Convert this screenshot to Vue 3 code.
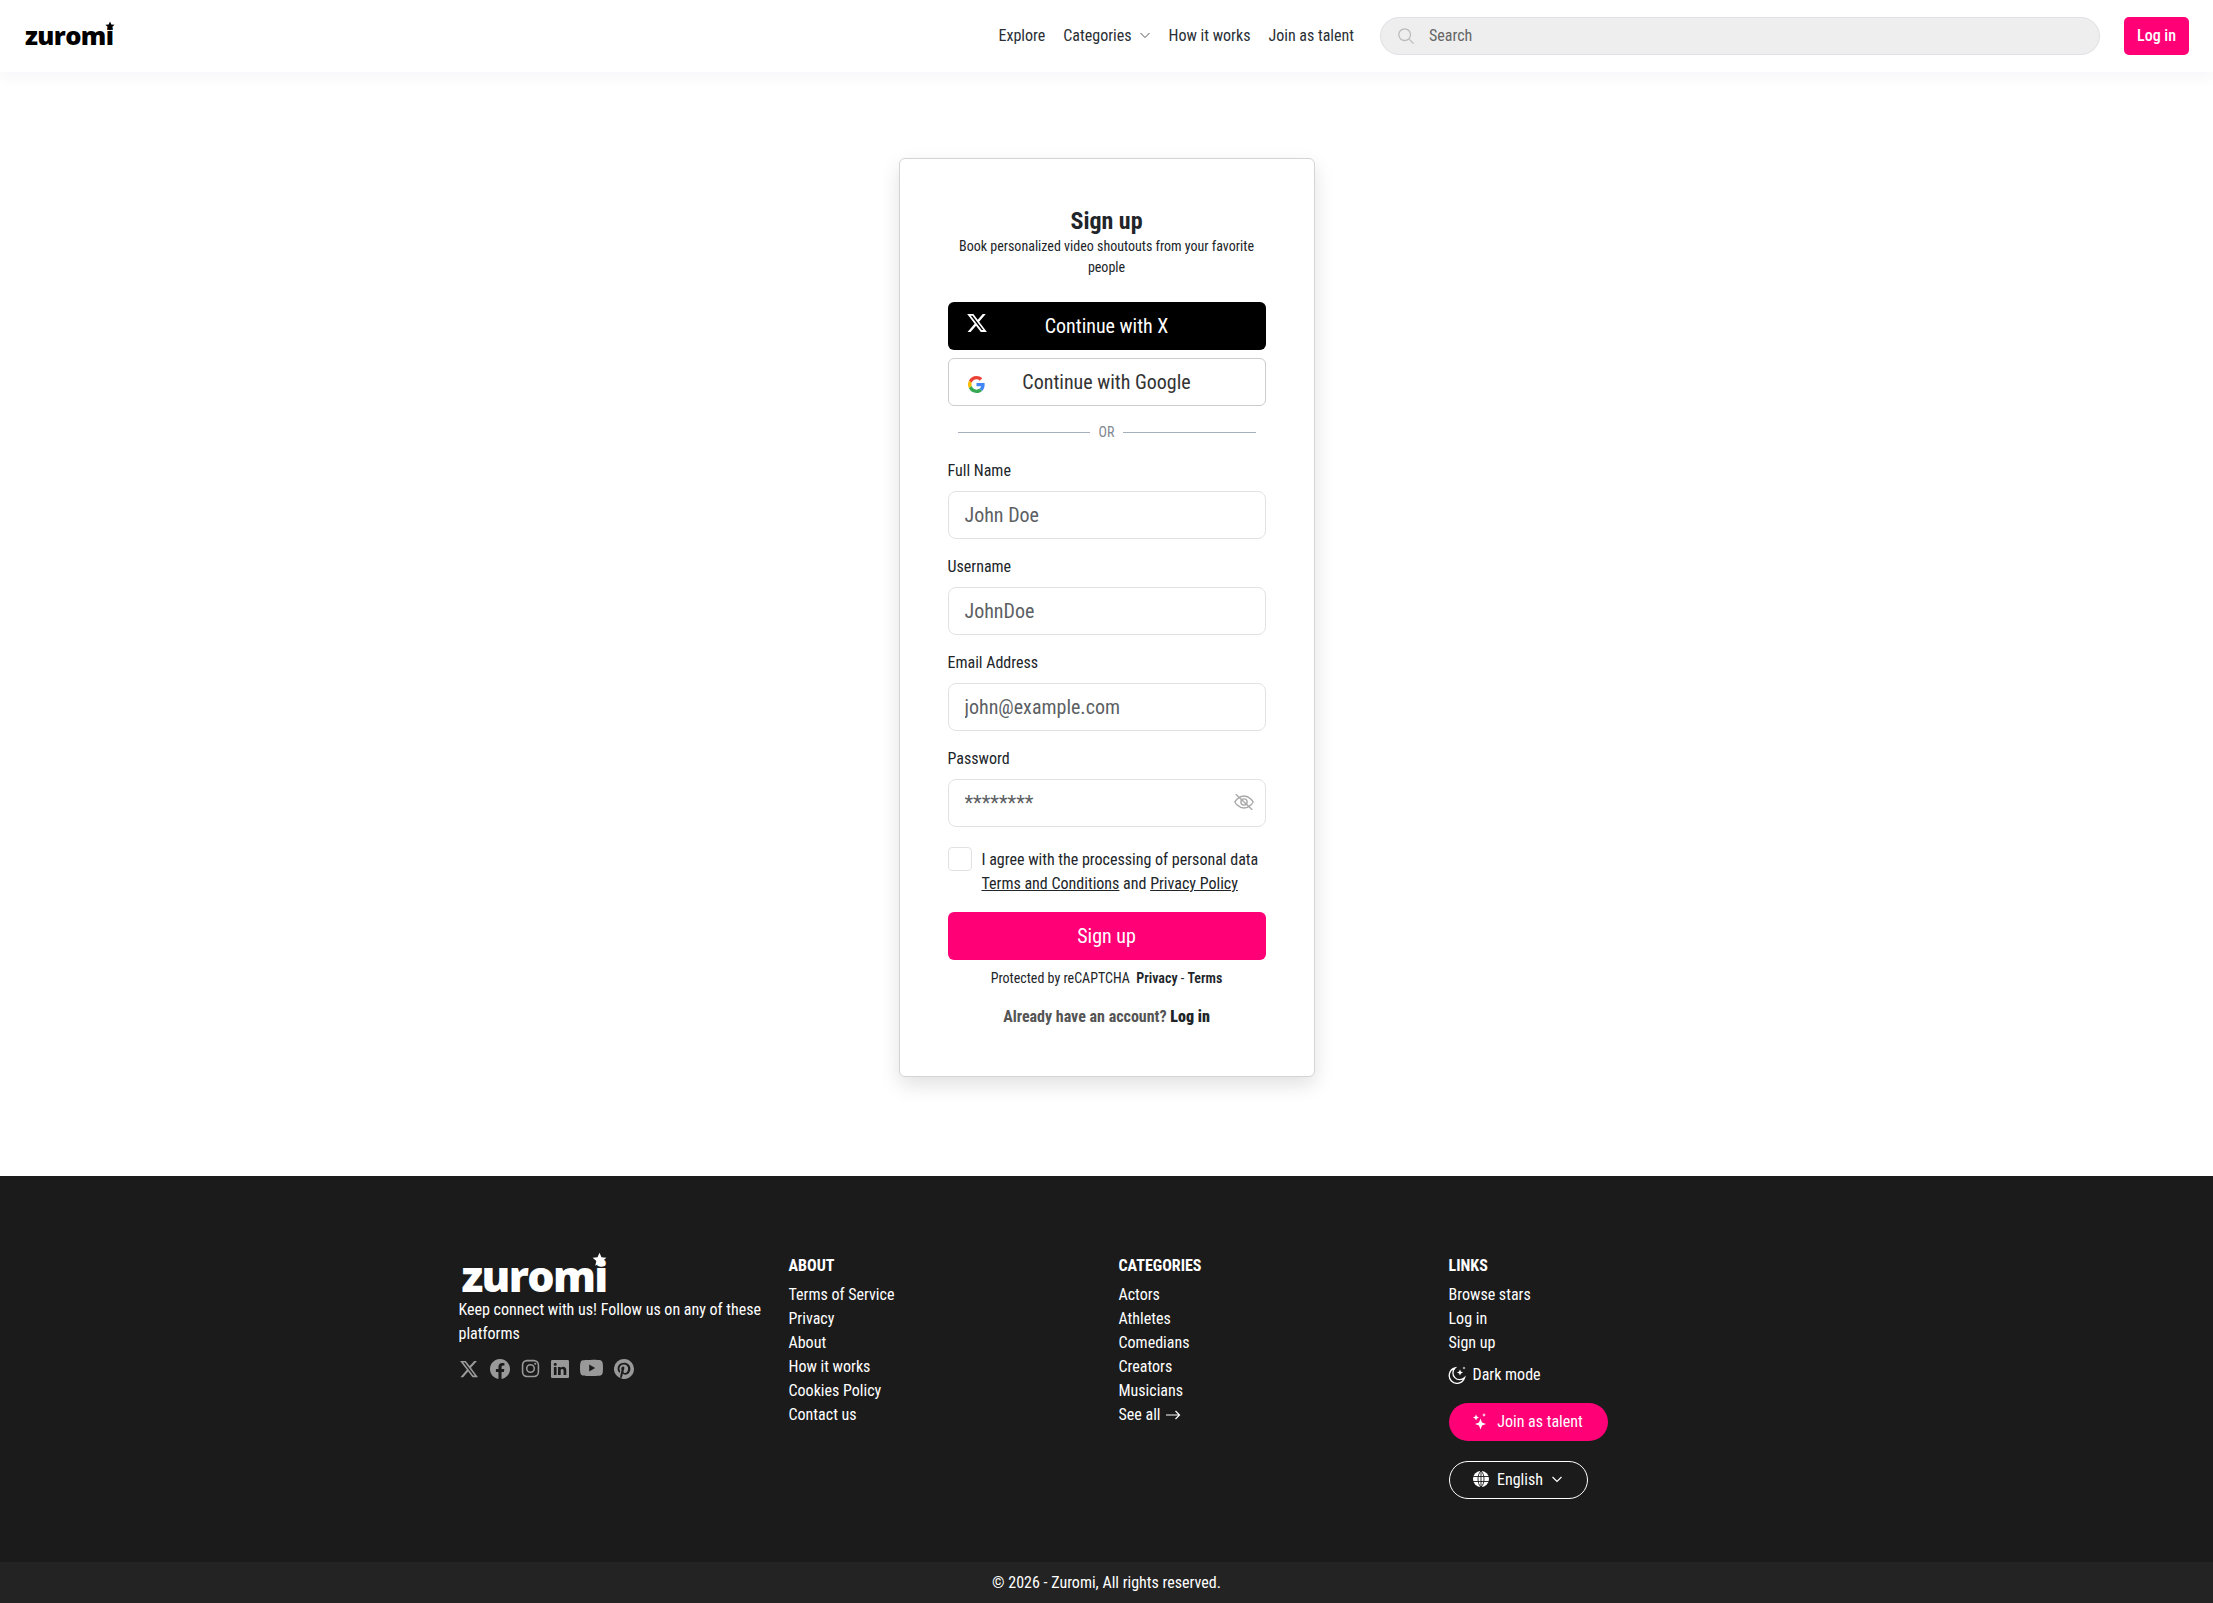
<!-- App.vue -->
<!-- Sign up page: top bar, form card and footer. -->

<script setup>
const navLinks = ['Explore', 'Categories', 'How it works', 'Join as talent']

const fields = [
  { label: 'Full Name', placeholder: 'John Doe', type: 'text' },
  { label: 'Username', placeholder: 'JohnDoe', type: 'text' },
  { label: 'Email Address', placeholder: 'john@example.com', type: 'email' },
]

const aboutLinks = ['Terms of Service', 'Privacy', 'About', 'How it works', 'Cookies Policy', 'Contact us']
const categoryLinks = ['Actors', 'Athletes', 'Comedians', 'Creators', 'Musicians']
const otherLinks = ['Browse stars', 'Log in', 'Sign up']

const xPath = 'M18.244 2.25h3.308l-7.227 8.26 8.502 11.24H16.17l-5.214-6.817L4.99 21.75H1.68l7.73-8.835L1.254 2.25H8.08l4.713 6.231zm-1.161 17.52h1.833L7.084 4.126H5.117z'
</script>

<template>
  <div class="page">
    <header class="topbar">
      <a class="logo">zuromi<svg class="logo-star" viewBox="0 0 24 24"><path d="M12 1l3.2 7.2 7.8.8-5.9 5.2 1.7 7.7L12 18l-6.8 4 1.7-7.7L1 9l7.8-.8z" /></svg></a>
      <nav class="nav">
        <a v-for="link in navLinks" :key="link" class="nav-link">
          {{ link }}
          <svg v-if="link === 'Categories'" class="caret" viewBox="0 0 12 12"><path d="M1.5 4l4.5 4.5L10.5 4" /></svg>
        </a>
      </nav>
      <div class="search">
        <svg class="search-icon" viewBox="0 0 20 20"><circle cx="8.5" cy="8.5" r="6.5" /><path d="M13.5 13.5l5 5" /></svg>
        <input type="text" placeholder="Search" />
      </div>
      <button class="login-btn">Log in</button>
    </header>

    <main class="main">
      <section class="card">
        <h1>Sign up</h1>
        <p class="subtitle">Book personalized video shoutouts from your favorite people</p>

        <button class="social social-x">
          <svg class="x-icon" viewBox="0 0 24 24"><path :d="xPath" /></svg>
          Continue with X
        </button>
        <button class="social social-google">
          <svg class="google-icon" viewBox="0 0 48 48">
            <path fill="#EA4335" d="M24 9.5c3.5 0 6.7 1.2 9.2 3.6l6.9-6.9C35.9 2.4 30.5 0 24 0 14.6 0 6.5 5.4 2.6 13.2l8 6.2C12.5 13.6 17.8 9.5 24 9.5z" />
            <path fill="#4285F4" d="M46.98 24.55c0-1.57-.15-3.09-.38-4.55H24v9.02h12.94c-.58 2.96-2.26 5.48-4.78 7.18l7.73 6c4.51-4.18 7.09-10.36 7.09-17.65z" />
            <path fill="#FBBC05" d="M10.53 28.59c-.48-1.45-.76-2.99-.76-4.59s.27-3.14.76-4.59l-7.98-6.19C.92 16.46 0 20.12 0 24c0 3.88.92 7.54 2.56 10.78l7.97-6.19z" />
            <path fill="#34A853" d="M24 48c6.48 0 11.93-2.13 15.89-5.81l-7.73-6c-2.15 1.45-4.92 2.3-8.16 2.3-6.26 0-11.57-4.22-13.47-9.91l-7.98 6.19C6.51 42.62 14.62 48 24 48z" />
          </svg>
          Continue with Google
        </button>

        <div class="divider"><span>OR</span></div>

        <label v-for="field in fields" :key="field.label" class="field">
          {{ field.label }}
          <input :type="field.type" :placeholder="field.placeholder" />
        </label>

        <label class="field">
          Password
          <span class="password">
            <input type="text" placeholder="********" />
            <svg class="eye" viewBox="0 0 24 24">
              <path d="M2 12s3.600-6.500 10-6.500S22 12 22 12s-3.600 6.500-10 6.500S2 12 2 12z" />
              <circle cx="12" cy="12" r="3.400" />
              <path d="M3 3.500l18 17" />
            </svg>
          </span>
        </label>

        <div class="agree">
          <span class="checkbox"></span>
          <p>I agree with the processing of personal data<br /><a>Terms and Conditions</a> and <a>Privacy Policy</a></p>
        </div>

        <button class="submit">Sign up</button>
        <p class="recaptcha">Protected by reCAPTCHA &nbsp;<b>Privacy</b> - <b>Terms</b></p>
        <p class="have-account">Already have an account? <b>Log in</b></p>
      </section>
    </main>

    <footer class="footer">
      <div class="footer-inner">
        <div class="col">
          <a class="logo logo-footer">zuromi<svg class="logo-star" viewBox="0 0 24 24"><path d="M12 1l3.2 7.2 7.8.8-5.9 5.2 1.7 7.7L12 18l-6.8 4 1.7-7.7L1 9l7.8-.8z" /></svg></a>
          <p class="follow">Keep connect with us! Follow us on any of these platforms</p>
          <div class="socials">
            <svg class="s-x" viewBox="0 0 24 24"><path :d="xPath" /></svg>
            <svg class="s-fb" viewBox="0 0 16 16"><path d="M16 8.049c0-4.446-3.582-8.05-8-8.05C3.58 0-.002 3.603-.002 8.05c0 4.017 2.926 7.347 6.75 7.951v-5.625h-2.03V8.05H6.75V6.275c0-2.017 1.195-3.131 3.022-3.131.876 0 1.791.157 1.791.157v1.98h-1.009c-.993 0-1.303.621-1.303 1.258v1.51h2.218l-.354 2.326H9.25V16c3.824-.604 6.75-3.934 6.75-7.951" /></svg>
            <svg class="s-ig" viewBox="0 0 24 24"><rect x="2" y="2" width="20" height="20" rx="5.500" /><circle cx="12" cy="12" r="4.800" /><circle class="dot" cx="18" cy="6" r="1.400" /></svg>
            <svg class="s-in" viewBox="0 0 16 16"><path d="M0 1.146C0 .513.526 0 1.175 0h13.65C15.474 0 16 .513 16 1.146v13.708c0 .633-.526 1.146-1.175 1.146H1.175C.526 16 0 15.487 0 14.854zm4.943 12.248V6.169H2.542v7.225zm-1.2-8.212c.837 0 1.358-.554 1.358-1.248-.015-.709-.52-1.248-1.342-1.248S2.4 3.226 2.4 3.934c0 .694.521 1.248 1.327 1.248zm4.908 8.212V9.359c0-.216.016-.432.08-.586.173-.431.568-.878 1.232-.878.869 0 1.216.662 1.216 1.634v3.865h2.401V9.25c0-2.22-1.184-3.252-2.764-3.252-1.274 0-1.845.7-2.165 1.193v.025h-.016l.016-.025V6.169h-2.4c.03.678 0 7.225 0 7.225z" /></svg>
            <svg class="s-yt" viewBox="0 0 16 16"><path d="M8.051 1.999h.089c.822.003 4.987.033 6.11.335a2.01 2.01 0 0 1 1.415 1.42c.101.38.172.883.22 1.402l.01.104.022.26.008.104c.065.914.073 1.77.074 1.957v.075c-.001.194-.01 1.108-.082 2.06l-.008.105-.009.104c-.05.572-.124 1.14-.235 1.558a2.01 2.01 0 0 1-1.415 1.42c-1.16.312-5.569.334-6.18.335h-.142c-.309 0-1.587-.006-2.927-.052l-.17-.006-.087-.004-.171-.007-.171-.007c-1.11-.049-2.167-.128-2.654-.26a2.01 2.01 0 0 1-1.415-1.419c-.111-.417-.185-.986-.235-1.558L.09 9.82l-.008-.104A31 31 0 0 1 0 7.68v-.123c.002-.215.01-.958.064-1.778l.007-.103.003-.052.008-.104.022-.26.01-.104c.048-.519.119-1.023.22-1.402a2.01 2.01 0 0 1 1.415-1.42c.487-.13 1.544-.21 2.654-.26l.17-.007.172-.006.086-.003.171-.007A100 100 0 0 1 7.858 2zM6.4 5.209v4.818l4.157-2.408z" /></svg>
            <svg class="s-pin" viewBox="0 0 16 16"><path d="M8 0a8 8 0 0 0-2.915 15.452c-.07-.633-.134-1.606.027-2.297.146-.625.938-3.977.938-3.977s-.239-.479-.239-1.187c0-1.113.645-1.943 1.448-1.943.682 0 1.012.512 1.012 1.127 0 .686-.437 1.712-.663 2.663-.188.796.4 1.446 1.185 1.446 1.422 0 2.515-1.5 2.515-3.664 0-1.915-1.377-3.254-3.342-3.254-2.276 0-3.612 1.707-3.612 3.471 0 .688.265 1.425.595 1.826a.24.24 0 0 1 .056.23c-.061.252-.196.796-.222.907-.035.146-.116.177-.268.107-1-.465-1.624-1.926-1.624-3.1 0-2.523 1.834-4.84 5.286-4.84 2.775 0 4.932 1.977 4.932 4.62 0 2.757-1.739 4.976-4.151 4.976-.811 0-1.573-.421-1.834-.919l-.498 1.902c-.181.695-.669 1.566-.995 2.097A8 8 0 1 0 8 0" /></svg>
          </div>
        </div>

        <div class="col">
          <h4>ABOUT</h4>
          <a v-for="link in aboutLinks" :key="link" class="foot-link">{{ link }}</a>
        </div>

        <div class="col">
          <h4>CATEGORIES</h4>
          <a v-for="link in categoryLinks" :key="link" class="foot-link">{{ link }}</a>
          <a class="foot-link see-all">See all
            <svg viewBox="0 0 16 12"><path d="M1 6h13.500M10.500 2l4 4-4 4" /></svg>
          </a>
        </div>

        <div class="col">
          <h4>LINKS</h4>
          <a v-for="link in otherLinks" :key="link" class="foot-link">{{ link }}</a>
          <a class="foot-link dark-mode">
            <svg viewBox="0 0 18 18"><path class="moon" d="M7 2A7.800 7.800 0 1 0 16.500 11.800 6.800 6.800 0 0 1 7 2z" /><path class="spark" d="M12 3.500l.9 2.100 2.100.9-2.100.9-.9 2.100-.9-2.100-2.100-.9 2.100-.9zM16 .5l.4 1.100 1.100.4-1.100.4-.4 1.100-.4-1.100-1.100-.4 1.100-.4z" /></svg>
            Dark mode
          </a>
          <button class="pill pill-join">
            <svg viewBox="0 0 14 17"><path d="M7.500 5.500L9 9.500l4 1.500-4 1.500-1.500 4-1.500-4-4-1.500 4-1.500zM3 1.500l.9 2.100 2.100.9-2.100.9-.9 2.100-.9-2.100L0 4.500l2.100-.9zM11 0l.6 1.400 1.400.6-1.400.6-.6 1.400-.6-1.400L9 2l1.400-.6z" /></svg>
            Join as talent
          </button>
          <button class="pill pill-lang">
            <svg class="globe" viewBox="0 0 16 16"><circle class="globe-disc" cx="8" cy="8" r="8" /><path d="M0 5.500h16M0 10.500h16M8 0v16M8 0C4 3 4 13 8 16M8 0c4 3 4 13 0 16" /></svg>
            English
            <svg class="caret-w" viewBox="0 0 12 12"><path d="M1.500 4l4.500 4.500L10.500 4" /></svg>
          </button>
        </div>
      </div>

      <div class="copyright">© 2026 - Zuromi, All rights reserved.</div>
    </footer>
  </div>
</template>

<style>
html, body { margin: 0; background: #fff; }
</style>

<style scoped>
.page {
  font-family: Roboto, "Liberation Sans", sans-serif;
  font-stretch: 75%;
  color: #212529;
  font-size: 16px;
}

a { text-decoration: none; }
button { font-family: inherit; font-stretch: inherit; cursor: pointer; }
p { margin: 0; }

.topbar {
  height: 72px;
  display: flex;
  align-items: center;
  padding: 0 24px 0 25px;
  background: #fff;
  box-shadow: 0 4px 14px rgba(60, 60, 110, 0.05);
  position: relative;
}

.logo {
  font-family: "Open Sans", sans-serif;
  font-stretch: 100%;
  font-weight: 800;
  font-size: 25.5px;
  line-height: 1;
  color: #000;
  position: relative;
  letter-spacing: -0.6px;
  fill: #000;
}

.logo-star {
  position: absolute;
  width: 10px;
  height: 10px;
  right: -2px;
  top: -2px;
}

.nav {
  margin-left: auto;
  padding-bottom: 2px;
  display: flex;
  align-items: center;
  gap: 18px;
  font-size: 16px;
}

.nav-link {
  color: #2a2f36;
  display: flex;
  align-items: center;
  gap: 7px;
}

.caret {
  width: 12px;
  height: 12px;
  fill: none;
  stroke: #555;
  stroke-width: 1;
}

.search {
  width: 720px;
  height: 38px;
  box-sizing: border-box;
  margin-left: 26px;
  display: flex;
  align-items: center;
  gap: 14px;
  padding-left: 16px;
  background: #eee;
  border: 1px solid #e0e0e6;
  border-radius: 19px;
}

.search-icon {
  width: 18px;
  height: 18px;
  fill: none;
  stroke: #bbb;
  stroke-width: 1.4;
}

.search input {
  border: none;
  background: none;
  outline: none;
  flex: 1;
  font: inherit;
  font-size: 16px;
  font-stretch: 75%;
  padding: 0 0 2px;
}

.search input::placeholder { color: #666; opacity: 1; }

.login-btn {
  margin-left: 24px;
  width: 65px;
  height: 38px;
  padding: 0 0 2px;
  border: none;
  border-radius: 5px;
  background: #ff0077;
  color: #fff;
  font-size: 16px;
  font-weight: 500;
}

.main {
  display: flex;
  justify-content: center;
  padding: 86px 0 99px;
}

.card {
  width: 416px;
  height: 919px;
  box-sizing: border-box;
  padding: 47px 48px 0;
  background: #fff;
  border: 1px solid #d4d4d4;
  border-radius: 6px;
  box-shadow: 0 8px 20px rgba(0, 0, 0, 0.12);
}

h1 {
  margin: 0;
  font-size: 24px;
  line-height: 30px;
  font-weight: 700;
  text-align: center;
}

.subtitle {
  font-size: 14px;
  line-height: 21px;
  text-align: center;
  padding: 0 8px;
  margin-bottom: 24px;
}

.social {
  position: relative;
  display: block;
  width: 100%;
  height: 48px;
  border-radius: 6px;
  font-size: 20px;
  padding: 0;
}

.social-x {
  background: #000;
  border: none;
  color: #fff;
}

.x-icon {
  position: absolute;
  left: 18px;
  top: 10px;
  width: 22px;
  height: 22px;
  fill: #fff;
}

.social-google {
  margin-top: 8px;
  background: #fff;
  border: 1px solid #ccc;
  color: #333;
}

.google-icon {
  position: absolute;
  left: 19px;
  top: 17px;
  width: 17px;
  height: 17px;
}

.divider {
  margin: 18px 10px 0;
  height: 16px;
  display: flex;
  align-items: center;
  gap: 9px;
  font-size: 14px;
  color: #808890;
}

.divider::before, .divider::after {
  content: '';
  flex: 1;
  height: 1px;
  background: #a6b0bc;
}

.field {
  display: block;
  font-size: 16px;
  line-height: 22px;
  margin-top: 17px;
}

.divider + .field { margin-top: 20px; }

.field input {
  display: block;
  width: 100%;
  height: 48px;
  box-sizing: border-box;
  margin-top: 9px;
  padding: 0 16px;
  background: #fff;
  border: 1px solid #e2e2e2;
  border-radius: 8px;
  font: inherit;
  font-size: 20px;
  font-stretch: 75%;
  outline: none;
}

.field input::placeholder { color: #5c5f63; opacity: 1; }

.password {
  display: block;
  position: relative;
}

.eye {
  position: absolute;
  right: 11px;
  top: 12px;
  width: 22px;
  height: 22px;
  fill: none;
  stroke: #a8a8a8;
  stroke-width: 1.5;
}

.agree {
  display: flex;
  gap: 10px;
  margin-top: 20px;
  font-size: 16px;
  line-height: 24px;
}

.agree p { margin-top: 1px; }

.checkbox {
  flex: none;
  width: 24px;
  height: 24px;
  box-sizing: border-box;
  border: 1px solid #e2e2e2;
  border-radius: 4px;
}

.agree a {
  color: inherit;
  text-decoration: underline;
}

.submit {
  display: block;
  width: 100%;
  height: 48px;
  margin-top: 16px;
  border: none;
  border-radius: 6px;
  background: #ff0077;
  color: #fff;
  font-size: 20px;
}

.recaptcha {
  margin-top: 8px;
  text-align: center;
  font-size: 14px;
  line-height: 20px;
}

.recaptcha b { font-weight: 600; }

.have-account {
  margin-top: 18px;
  text-align: center;
  font-size: 16px;
  line-height: 22px;
  font-weight: 700;
  color: #555;
}

.have-account b { color: #212529; }

.footer {
  background: #1b1b1b;
  color: #fff;
}

.footer-inner {
  width: 1320px;
  height: 386px;
  box-sizing: border-box;
  margin: 0 auto;
  padding-top: 78px;
  display: grid;
  grid-template-columns: repeat(4, 330px);
}

.col {
  padding: 0 12px;
  display: flex;
  flex-direction: column;
  align-items: flex-start;
}

.logo-footer {
  color: #fff;
  fill: #fff;
  font-size: 43px;
  line-height: 44px;
  margin: 0 0 -3px 3px;
  letter-spacing: -1.7px;
}

.logo-footer .logo-star {
  width: 15px;
  height: 15px;
  top: -2px;
  right: -1px;
}

.follow {
  font-size: 16px;
  line-height: 24px;
  margin-top: 3px;
}

.socials {
  display: flex;
  align-items: center;
  gap: 11px;
  margin-top: 11px;
  fill: #999;
}

.socials svg { width: 20px; height: 20px; display: block; }
.socials .s-in { width: 18px; height: 18px; }
.socials .s-yt { width: 23px; height: 23px; }
.socials .s-ig { fill: none; stroke: #999; stroke-width: 2; width: 19px; height: 19px; }
.socials .s-ig .dot { fill: #999; stroke: none; }

h4 {
  margin: 0 0 5px;
  font-size: 16px;
  line-height: 24px;
  font-weight: 700;
}

.foot-link {
  color: #fff;
  font-size: 16px;
  line-height: 24px;
  display: flex;
  align-items: center;
}

.see-all svg {
  width: 16px;
  height: 12px;
  margin-left: 5px;
  fill: none;
  stroke: #fff;
  stroke-width: 1.2;
}

.dark-mode {
  gap: 7px;
  margin-top: 8px;
}

.dark-mode svg { width: 18px; height: 18px; margin-left: -1px; }
.moon { fill: none; stroke: #fff; stroke-width: 1.3; }
.spark { fill: #fff; }

.pill {
  display: flex;
  align-items: center;
  justify-content: center;
  height: 38px;
  border-radius: 19px;
  font-size: 16px;
  color: #fff;
  padding: 0 0 2px;
}

.pill-join {
  margin-top: 16px;
  width: 159px;
  gap: 10px;
  border: none;
  background: #ff0077;
}

.pill-join svg { width: 14px; height: 17px; fill: #fff; }

.pill-lang {
  margin-top: 20px;
  width: 139px;
  gap: 8px;
  background: none;
  border: 1px solid #fff;
}

.globe {
  width: 16px;
  height: 16px;
  fill: none;
  stroke: #1b1b1b;
  stroke-width: 0.9;
}

.globe-disc { fill: #fff; stroke: none; }

.caret-w {
  width: 12px;
  height: 12px;
  fill: none;
  stroke: #fff;
  stroke-width: 1.2;
}

.copyright {
  height: 41px;
  background: #232323;
  display: flex;
  align-items: center;
  justify-content: center;
  font-size: 16px;
}
</style>
